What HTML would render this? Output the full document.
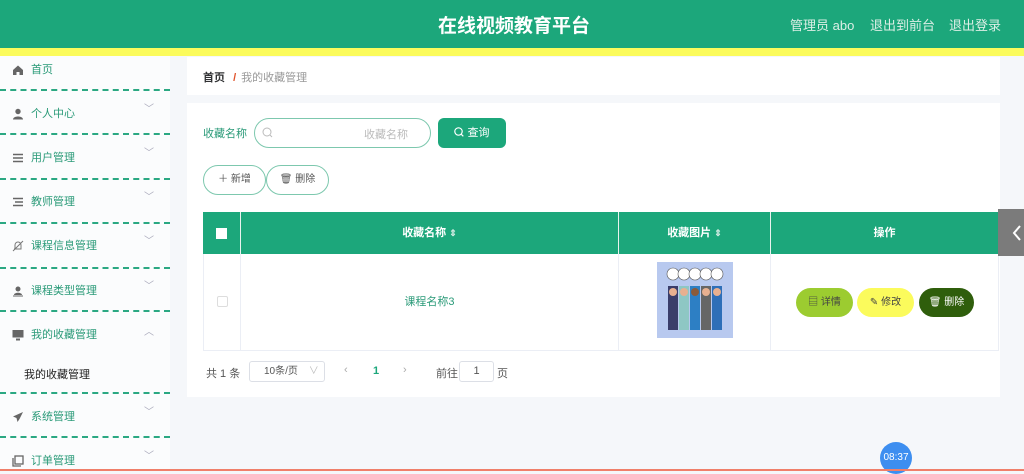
<!DOCTYPE html>
<html><head><meta charset="utf-8"><style>
*{margin:0;padding:0;box-sizing:border-box}
body{width:1024px;height:471px;overflow:hidden;background:#f5f7fa;font-family:"Liberation Sans","Noto Sans CJK SC",sans-serif;position:relative;font-size:12px}
.hdr{position:absolute;left:0;top:0;width:1024px;height:48px;background:#1ca77b}
.ystrip{position:absolute;left:0;top:48px;width:1024px;height:8px;background:#fbfb5c}
.title{position:absolute;left:0;width:1024px;top:11px;text-align:center;color:#fff;font-size:19px;font-weight:bold;padding-left:4px}
.hr{position:absolute;top:15px;color:#dcefe6;font-size:13px}
.side{position:absolute;left:0;top:56px;width:170px;height:415px;background:#fbfcfd}
.it{position:absolute;left:0;width:170px;height:20px;color:#2a9a78;font-size:11px;line-height:20px}
.it .ic{position:absolute;left:12px;top:4px;width:12px;height:12px}
.it .tx{position:absolute;left:31px}
.it .ar{position:absolute;left:144px;top:-4px;color:#aab;font-size:10px}
.sep{position:absolute;left:0;width:170px;border-top:2px dashed #2ba882}
.card{position:absolute;background:#fff}
.th{position:absolute;top:212px;height:42px;background:#1ca77b;color:#fff;font-weight:bold;font-size:11px;text-align:center;line-height:42px;border-right:1px solid #e8f3ee}
.th small{font-size:9px;color:#d8eee6}
.td{position:absolute;top:254px;height:97px;border-right:1px solid #ebeef5;border-bottom:1px solid #ebeef5;text-align:center}
.btn{position:absolute;border-radius:16px;font-size:10px;text-align:center}
</style></head><body>
<div class="hdr"></div><div class="ystrip"></div>
<div class="title">在线视频教育平台</div>
<div class="hr" style="left:790px">管理员 abo</div>
<div class="hr" style="left:870px">退出到前台</div>
<div class="hr" style="left:949px">退出登录</div>

<div class="side"></div>
<div class="it" style="top:60px"><svg class="ic" viewBox="0 0 12 12"><path d="M1 6L6 1.5 11 6V11H7.5V8h-3v3H1z" fill="#666"/></svg><span class="tx">首页</span></div>
<div class="sep" style="top:89px"></div>
<div class="it" style="top:104px"><svg class="ic" viewBox="0 0 12 12"><circle cx="6" cy="3.5" r="2.7" fill="#666"/><path d="M1 11.5C1 7.5 11 7.5 11 11.5z" fill="#666"/></svg><span class="tx">个人中心</span><span class="ar">﹀</span></div>
<div class="sep" style="top:133px"></div>
<div class="it" style="top:148px"><svg class="ic" viewBox="0 0 12 12"><path d="M1 2.5h10M1 6h10M1 9.5h10" stroke="#666" stroke-width="1.5"/></svg><span class="tx">用户管理</span><span class="ar">﹀</span></div>
<div class="sep" style="top:178px"></div>
<div class="it" style="top:192px"><svg class="ic" viewBox="0 0 12 12"><path d="M1 2.5h10M3 6h8M1 9.5h10" stroke="#666" stroke-width="1.5"/></svg><span class="tx">教师管理</span><span class="ar">﹀</span></div>
<div class="sep" style="top:222px"></div>
<div class="it" style="top:236px"><svg class="ic" viewBox="0 0 12 12"><path d="M3 9V5a3 3 0 016 0v4H2M1 11L11 1" stroke="#777" fill="none"/></svg><span class="tx">课程信息管理</span><span class="ar">﹀</span></div>
<div class="sep" style="top:267px"></div>
<div class="it" style="top:281px"><svg class="ic" viewBox="0 0 12 12"><circle cx="6" cy="4" r="2.5" fill="#666"/><path d="M2 10C2 7 10 7 10 10zM1 10.5h10v1H1z" fill="#666"/></svg><span class="tx">课程类型管理</span><span class="ar">﹀</span></div>
<div class="sep" style="top:310px"></div>
<div class="it" style="top:325px"><svg class="ic" viewBox="0 0 12 12"><rect x="0.5" y="1" width="11" height="7.5" fill="#666"/><rect x="4" y="9.5" width="4" height="2" fill="#666"/></svg><span class="tx">我的收藏管理</span><span class="ar" style="top:-2px">︿</span></div>
<div class="it" style="top:365px;color:#222"><span class="tx" style="left:24px">我的收藏管理</span></div>
<div class="sep" style="top:392px"></div>
<div class="it" style="top:407px"><svg class="ic" viewBox="0 0 12 12"><path d="M11 1L1 5.5 4.5 7 5.5 11 7.5 8 11 1z" fill="#666"/></svg><span class="tx">系统管理</span><span class="ar">﹀</span></div>
<div class="sep" style="top:436px"></div>
<div class="it" style="top:451px"><svg class="ic" viewBox="0 0 12 12"><rect x="3" y="1" width="8" height="8" fill="none" stroke="#666" stroke-width="1.3"/><path d="M1 3v8h8" fill="none" stroke="#666" stroke-width="1.3"/></svg><span class="tx">订单管理</span><span class="ar">﹀</span></div>

<div class="card" style="left:187px;top:57px;width:813px;height:38px"></div>
<div style="position:absolute;left:203px;top:69px;font-size:11px;color:#303133;font-weight:bold">首页 <span style="color:#e0522a;margin:0 5px">/</span><span style="color:#999;font-weight:normal">我的收藏管理</span></div>

<div class="card" style="left:187px;top:103px;width:813px;height:294px"></div>
<div style="position:absolute;left:203px;top:125px;font-size:11px;color:#2a9a78">收藏名称</div>
<div style="position:absolute;left:254px;top:118px;width:177px;height:30px;border:1px solid #7dc8ae;border-radius:15px"></div>
<svg style="position:absolute;left:262px;top:127px" width="11" height="11" viewBox="0 0 11 11"><circle cx="5" cy="5" r="4" fill="none" stroke="#bbb"/><path d="M8 8l2 2" stroke="#bbb"/></svg>
<div style="position:absolute;left:364px;top:126px;font-size:11px;color:#bbb">收藏名称</div>
<div style="position:absolute;left:438px;top:118px;width:68px;height:30px;background:#1ca77b;border-radius:6px;color:#fff;font-size:11px;line-height:30px;text-align:center"><svg width="10" height="10" viewBox="0 0 10 10" style="vertical-align:-1px"><circle cx="4.5" cy="4.5" r="3.7" fill="none" stroke="#fff" stroke-width="1.2"/><path d="M7.3 7.3l2 2" stroke="#fff" stroke-width="1.2"/></svg> 查询</div>
<div class="btn" style="left:203px;top:165px;width:63px;height:30px;border:1px solid #7dc8ae;line-height:28px;color:#555">＋ 新增</div>
<div class="btn" style="left:266px;top:165px;width:63px;height:30px;border:1px solid #7dc8ae;line-height:28px;color:#555">🗑 删除</div>

<div class="th" style="left:203px;width:38px"><span style="display:inline-block;width:11px;height:11px;background:#fff;vertical-align:middle"></span></div>
<div class="th" style="left:241px;width:378px">收藏名称 <small>⇕</small></div>
<div class="th" style="left:619px;width:152px">收藏图片 <small>⇕</small></div>
<div class="th" style="left:771px;width:228px">操作</div>
<div class="td" style="left:203px;width:38px;border-left:1px solid #ebeef5"><span style="display:inline-block;margin-top:42px;width:11px;height:11px;border:1px solid #ddd;border-radius:2px"></span></div>
<div class="td" style="left:241px;width:378px;line-height:97px;color:#2a9a78;font-size:11px">课程名称3</div>
<div class="td" style="left:619px;width:152px"></div>
<div class="td" style="left:771px;width:228px"></div>
<svg style="position:absolute;left:657px;top:262px" width="76" height="76" viewBox="0 0 76 76"><rect width="76" height="76" fill="#b8c9ef"/>
<g fill="#fff" stroke="#555" stroke-width=".6"><circle cx="16" cy="12" r="6"/><circle cx="27" cy="12" r="6"/><circle cx="38" cy="12" r="6"/><circle cx="49" cy="12" r="6"/><circle cx="60" cy="12" r="6"/></g>
<rect x="11" y="24" width="10" height="44" fill="#3a3d6a"/><rect x="22" y="24" width="10" height="44" fill="#8ec7c4"/><rect x="33" y="24" width="10" height="44" fill="#2d7fc4"/><rect x="44" y="24" width="10" height="44" fill="#666"/><rect x="55" y="24" width="10" height="44" fill="#2e6fb8"/>
<g fill="#e8b090"><circle cx="16" cy="30" r="4"/><circle cx="27" cy="30" r="4"/><circle cx="38" cy="30" r="4" fill="#8a5a3a"/><circle cx="49" cy="30" r="4"/><circle cx="60" cy="30" r="4"/></g></svg>
<div class="btn" style="left:796px;top:288px;width:57px;height:29px;background:#9ccc30;line-height:29px;color:#444">▤ 详情</div>
<div class="btn" style="left:857px;top:288px;width:57px;height:29px;background:#fbfb5c;line-height:29px;color:#444">✎ 修改</div>
<div class="btn" style="left:919px;top:288px;width:55px;height:29px;background:#2f5e0c;line-height:29px;color:#fff">🗑 删除</div>

<div style="position:absolute;left:206px;top:365px;font-size:11px;color:#555">共 1 条</div>
<div style="position:absolute;left:249px;top:361px;width:76px;height:21px;border:1px solid #dcdfe6;border-radius:3px;font-size:10px;color:#555;line-height:19px;padding-left:14px">10条/页 <span style="color:#bbb;margin-left:8px">∨</span></div>
<div style="position:absolute;left:344px;top:364px;color:#aaa;font-size:11px">‹</div>
<div style="position:absolute;left:373px;top:365px;color:#1ca77b;font-size:11px;font-weight:bold">1</div>
<div style="position:absolute;left:403px;top:364px;color:#aaa;font-size:11px">›</div>
<div style="position:absolute;left:436px;top:365px;font-size:11px;color:#555">前往</div>
<div style="position:absolute;left:459px;top:361px;width:35px;height:21px;border:1px solid #dcdfe6;border-radius:3px;font-size:11px;text-align:center;line-height:19px;color:#555">1</div>
<div style="position:absolute;left:497px;top:365px;font-size:11px;color:#555">页</div>

<div style="position:absolute;left:998px;top:209px;width:26px;height:47px;background:#7b7b7b"><svg width="26" height="47"><path d="M22 17l-6 7 6 7" stroke="#fff" stroke-width="2" fill="none"/></svg></div>
<div style="position:absolute;left:880px;top:442px;width:32px;height:32px;border-radius:50%;background:#3d8ef0;color:#fff;font-size:10px;text-align:center;line-height:32px">08:37</div>
<div style="position:absolute;left:0;top:469px;width:1024px;height:2px;background:#f07f6a"></div>
</body></html>
